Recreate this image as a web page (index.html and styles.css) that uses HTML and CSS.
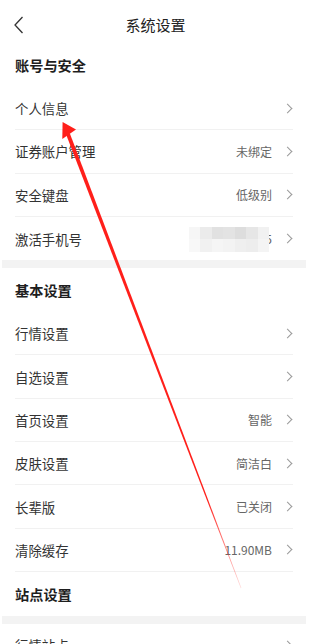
FILE: index.html
```html
<!DOCTYPE html>
<html lang="zh-CN">
<head>
    <meta charset="UTF-8">
    <title>系统设置</title>
    <link rel="stylesheet" href="styles.css">
</head>
<body>
    <div class="page">
        <div class="nav">
            <svg class="back" width="12" height="18" viewBox="0 0 12 18">
                <polyline points="9.5,1 2,9 9.5,17" fill="none" stroke="#333" stroke-width="1.3" />
            </svg>
            <div class="nav-title">系统设置</div>
        </div>

        <!-- 账号与安全 -->
        <div class="section-title">账号与安全</div>
        <div class="row"><span class="label">个人信息</span><span class="right"><i class="chev"></i></span></div>
        <div class="row"><span class="label">证券账户管理</span><span class="right"><span class="value">未绑定</span><i class="chev"></i></span></div>
        <div class="row"><span class="label">安全键盘</span><span class="right"><span class="value">低级别</span><i class="chev"></i></span></div>
        <div class="row last"><span class="label">激活手机号</span><span class="right"><span class="mosaic">
            <b style="background:#f6f6f6"></b><b style="background:#ebebeb"></b><b style="background:#e1e1e1"></b><b style="background:#e3e3e3"></b><b style="background:#dddddd"></b><b style="background:#e6e6e6"></b><b style="background:#f1f1f1"></b>
            <b style="background:#f8f8f8"></b><b style="background:#f1f1f1"></b><b style="background:#f5f5f5"></b><b style="background:#f3f3f3"></b><b style="background:#efefef"></b><b style="background:#ededed"></b><b style="background:#f4f4f4"></b>
        </span><span class="value tail">5</span><i class="chev"></i></span></div>

        <div class="band"></div>

        <!-- 基本设置 -->
        <div class="section-title">基本设置</div>
        <div class="row"><span class="label">行情设置</span><span class="right"><i class="chev"></i></span></div>
        <div class="row"><span class="label">自选设置</span><span class="right"><i class="chev"></i></span></div>
        <div class="row"><span class="label">首页设置</span><span class="right"><span class="value">智能</span><i class="chev"></i></span></div>
        <div class="row"><span class="label">皮肤设置</span><span class="right"><span class="value">简洁白</span><i class="chev"></i></span></div>
        <div class="row"><span class="label">长辈版</span><span class="right"><span class="value">已关闭</span><i class="chev"></i></span></div>
        <div class="row"><span class="label">清除缓存</span><span class="right"><span class="value">11.90MB</span><i class="chev"></i></span></div>

        <div class="section-title">站点设置</div>
        <div class="band"></div>
        <div class="row"><span class="label">行情站点</span><span class="right"><i class="chev"></i></span></div>

        <!-- annotation arrow -->
        <svg class="arrow" width="311" height="644" viewBox="0 0 311 644">
            <defs>
                <linearGradient id="fade" x1="0" y1="134" x2="0" y2="590" gradientUnits="userSpaceOnUse">
                    <stop offset="0" stop-color="#ff1f1a" stop-opacity="1" />
                    <stop offset="0.8" stop-color="#ff1f1a" stop-opacity="1" />
                    <stop offset="1" stop-color="#ff1f1a" stop-opacity="0.15" />
                </linearGradient>
            </defs>
            <polygon points="69.8,133.2 66.2,134.8 240.8,588.2 241.4,588" fill="url(#fade)" />
            <polygon points="62.6,122 62.3,139 76,129.5" fill="#ff1f1a" />
        </svg>
    </div>
</body>
</html>
```

FILE: styles.css
```css
body {
    margin: 0;
    padding: 0;
    background: #fff;
    font-family: "Noto Sans CJK SC", "Noto Sans", sans-serif;
    color: #333;
}

.page {
    position: relative;
    width: 311px;
    height: 644px;
    overflow: hidden;
}

.nav {
    height: 43px;
    position: relative;
    display: flex;
    justify-content: center;
}

.back {
    position: absolute;
    left: 13px;
    top: 16px;
}

.nav-title {
    margin-top: 14px;
    line-height: 22px;
    font-size: 15px;
    color: #222;
}

.section-title {
    height: 44px;
    display: flex;
    align-items: center;
    padding-left: 15px;
    font-size: 14.2px;
    font-weight: bold;
    color: #1e1e1e;
}

.row {
    height: 43.3px;
    box-sizing: border-box;
    margin: 0 18px 0 15px;
    display: flex;
    align-items: center;
    justify-content: space-between;
    border-bottom: 1px solid #f1f1f1;
}

.row.last {
    border-bottom: none;
}

.label {
    font-size: 13.4px;
    color: #333;
}

.right {
    display: flex;
    align-items: center;
}

.value {
    font-size: 12px;
    color: #666;
    margin-right: 12px;
}

.value.tail {
    margin-left: -4px;
}

.chev {
    display: block;
    width: 6px;
    height: 6px;
    border-top: 1px solid #9a9a9a;
    border-right: 1px solid #9a9a9a;
    transform: rotate(45deg);
    margin-right: 2px;
}

.mosaic {
    display: grid;
    grid-template-columns: repeat(7, 11.5px);
    grid-template-rows: 12.5px 12.5px;
    margin-top: 1px;
    position: relative;
    z-index: 1;
}

.mosaic b {
    display: block;
}

.band {
    height: 8px;
    margin: 0 5px 0 2px;
    background: #f3f3f3;
}

.arrow {
    position: absolute;
    left: 0;
    top: 0;
    z-index: 2;
    pointer-events: none;
}
```
